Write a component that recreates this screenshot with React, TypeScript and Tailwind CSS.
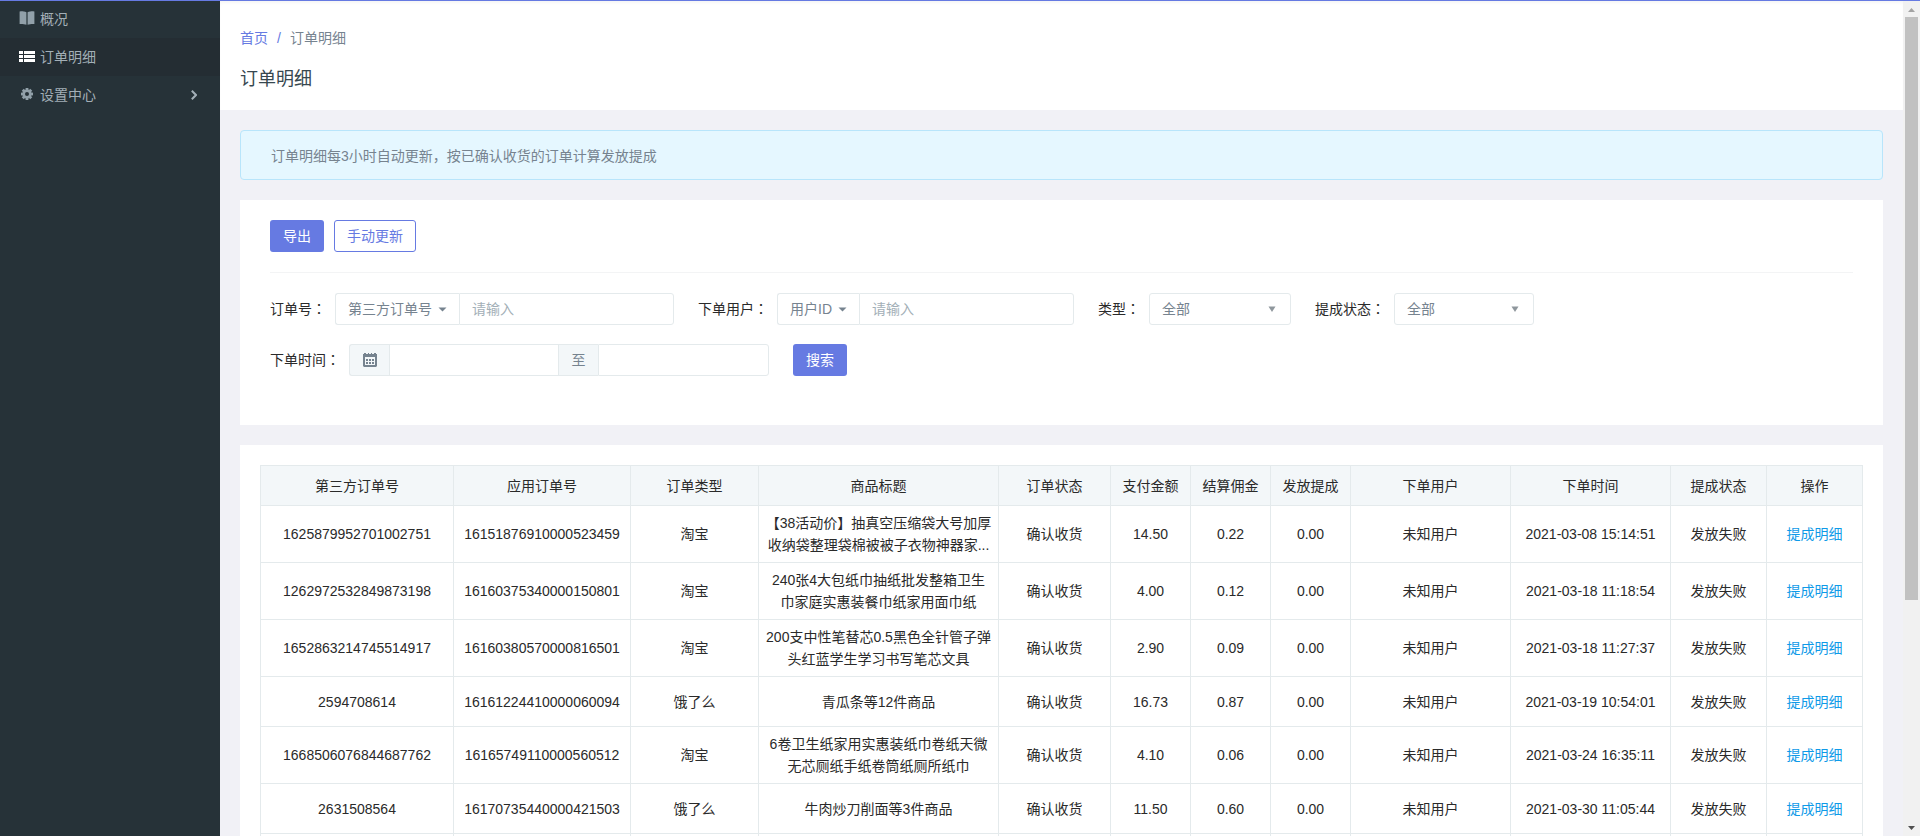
import type { ReactNode } from "react";

type Order = {
  thirdNo: string;
  appNo: string;
  type: string;
  title: string;
  paid: string;
  commission: string;
  issued: string;
  time: string;
};

const orders: Order[] = [
  {
    thirdNo: "1625879952701002751",
    appNo: "16151876910000523459",
    type: "淘宝",
    title: "【38活动价】抽真空压缩袋大号加厚收纳袋整理袋棉被被子衣物神器家...",
    paid: "14.50",
    commission: "0.22",
    issued: "0.00",
    time: "2021-03-08 15:14:51",
  },
  {
    thirdNo: "1262972532849873198",
    appNo: "16160375340000150801",
    type: "淘宝",
    title: "240张4大包纸巾抽纸批发整箱卫生巾家庭实惠装餐巾纸家用面巾纸",
    paid: "4.00",
    commission: "0.12",
    issued: "0.00",
    time: "2021-03-18 11:18:54",
  },
  {
    thirdNo: "1652863214745514917",
    appNo: "16160380570000816501",
    type: "淘宝",
    title: "200支中性笔替芯0.5黑色全针管子弹头红蓝学生学习书写笔芯文具",
    paid: "2.90",
    commission: "0.09",
    issued: "0.00",
    time: "2021-03-18 11:27:37",
  },
  {
    thirdNo: "2594708614",
    appNo: "16161224410000060094",
    type: "饿了么",
    title: "青瓜条等12件商品",
    paid: "16.73",
    commission: "0.87",
    issued: "0.00",
    time: "2021-03-19 10:54:01",
  },
  {
    thirdNo: "1668506076844687762",
    appNo: "16165749110000560512",
    type: "淘宝",
    title: "6卷卫生纸家用实惠装纸巾卷纸天微无芯厕纸手纸卷筒纸厕所纸巾",
    paid: "4.10",
    commission: "0.06",
    issued: "0.00",
    time: "2021-03-24 16:35:11",
  },
  {
    thirdNo: "2631508564",
    appNo: "16170735440000421503",
    type: "饿了么",
    title: "牛肉炒刀削面等3件商品",
    paid: "11.50",
    commission: "0.60",
    issued: "0.00",
    time: "2021-03-30 11:05:44",
  },
];

const columns = [
  { label: "第三方订单号", width: "w-[193px]" },
  { label: "应用订单号", width: "w-[177px]" },
  { label: "订单类型", width: "w-[128px]" },
  { label: "商品标题", width: "w-[240px]" },
  { label: "订单状态", width: "w-[112px]" },
  { label: "支付金额", width: "w-[80px]" },
  { label: "结算佣金", width: "w-[80px]" },
  { label: "发放提成", width: "w-[80px]" },
  { label: "下单用户", width: "w-[160px]" },
  { label: "下单时间", width: "w-[160px]" },
  { label: "提成状态", width: "w-[96px]" },
  { label: "操作", width: "w-[96px]" },
];

const BookIcon = () => (
  <svg viewBox="0 0 16 14" className="h-3.5 w-4" fill="currentColor">
    <path d="M.6.4 2 .3C4 .3 6 .7 7.400 1.300V13.800C6 13.200 4 12.900 2 12.900L.6 13z" />
    <path d="M15.400.4 14 .3C12 .3 10 .7 8.600 1.300V13.800C10 13.200 12 12.900 14 12.900L15.400 13z" />
  </svg>
);

const ListIcon = () => (
  <svg viewBox="0 0 16 11" className="h-[11px] w-4" fill="currentColor">
    <path d="M0 0h4v3H0zM5 0h11v3H5zM0 4h4v3H0zM5 4h11v3H5zM0 8h4v3H0zM5 8h11v3H5z" />
  </svg>
);

const GearIcon = () => (
  <svg viewBox="0 0 14 14" className="h-3.5 w-4">
    <g fill="currentColor">
      <rect x="5.600" y="1" width="2.800" height="12" />
      <rect x="5.600" y="1" width="2.800" height="12" transform="rotate(45 7 7)" />
      <rect x="5.600" y="1" width="2.800" height="12" transform="rotate(90 7 7)" />
      <rect x="5.600" y="1" width="2.800" height="12" transform="rotate(135 7 7)" />
    </g>
    <circle cx="7" cy="7" r="3.300" fill="none" stroke="currentColor" strokeWidth="2.600" />
    <circle cx="7" cy="7" r="2" fill="#263238" />
  </svg>
);

const CalendarIcon = () => (
  <svg viewBox="0 0 14 14" className="size-3.5" fill="currentColor">
    <path
      fillRule="evenodd"
      d="M0 1h1V0h2v1h2V0h1v1h2V0h1v1h2V0h2v1h1v12l-1 1H1l-1-1zM2 4v8h10V4z"
    />
    <path d="M3 6h2v2H3zM6 6h2v2H6zM9 6h2v2H9zM3 9h2v2H3zM6 9h2v2H6zM9 9h2v2H9z" />
  </svg>
);

const Caret = () => (
  <svg viewBox="0 0 9 5" className="h-[5px] w-[9px]" fill="currentColor">
    <path d="M.5.5h8L4.500 4.500z" />
  </svg>
);

const MenuItem = ({
  icon,
  label,
  active,
  arrow,
}: {
  icon: ReactNode;
  label: string;
  active?: boolean;
  arrow?: boolean;
}) => (
  <li>
    <a
      href="#"
      className={`flex h-[38px] items-center px-[19px] text-[#a3afb7] ${active ? "bg-[#242d33]" : ""}`}
    >
      <span className={`mr-[5px] pb-0.5 ${active ? "text-white" : "text-[#91a0a9]"}`}>{icon}</span>
      <span>{label}</span>
      {arrow && (
        <svg viewBox="0 0 6 10" className="mr-1 ml-auto h-2.5 w-1.5" fill="none" stroke="currentColor" strokeWidth="2">
          <path d="M.8.8 5 5 .8 9.200" />
        </svg>
      )}
    </a>
  </li>
);

const FieldLabel = ({ htmlFor, text }: { htmlFor: string; text: string }) => (
  <label htmlFor={htmlFor} className="mr-[9px]">
    {text}
    <span className="font-['Noto_Sans_CJK_TC',sans-serif] leading-none">：</span>
  </label>
);

const SelectBox = ({ id, label, width }: { id: string; label: string; width: string }) => (
  <div className="flex items-center">
    <FieldLabel htmlFor={id} text={label} />
    <div className={`relative ${width}`}>
      <select
        id={id}
        className="h-8 w-full appearance-none rounded-[3px] border border-[#e4eaec] bg-white px-3 text-[#76838f]"
      >
        <option>全部</option>
      </select>
      <svg viewBox="0 0 8 6" className="pointer-events-none absolute top-[13px] right-[15px] h-1.5 w-2" fill="#8f979d">
        <path d="M.5.5h7L4 6z" />
      </svg>
    </div>
  </div>
);

const InputGroup = ({
  id,
  label,
  option,
}: {
  id: string;
  label: string;
  option: string;
}) => (
  <div className="flex items-center">
    <FieldLabel htmlFor={id} text={label} />
    <button
      type="button"
      className="flex h-8 items-center gap-1.5 rounded-l-[3px] border border-r-0 border-[#e4eaec] px-3 text-[#76838f]"
    >
      {option}
      <Caret />
    </button>
    <input
      id={id}
      type="text"
      placeholder="请输入"
      className="h-8 w-[215px] rounded-r-[3px] border border-[#e4eaec] px-3 placeholder:text-[#a3afb7]"
    />
  </div>
);

const App = () => {
  return (
    <div className="relative flex h-screen overflow-hidden bg-[#f1f1f6] font-['Liberation_Sans','Noto_Sans_CJK_SC',sans-serif] text-sm text-[#2a2a2a]">
      {/* Loading bar */}
      <div className="absolute inset-x-0 top-0 z-10 h-px bg-[#667ae2]" />

      {/* Sidebar */}
      <nav className="w-[220px] shrink-0 bg-[#263238]">
        <ul>
          <MenuItem icon={<BookIcon />} label="概况" />
          <MenuItem icon={<ListIcon />} label="订单明细" active />
          <MenuItem icon={<GearIcon />} label="设置中心" arrow />
        </ul>
      </nav>

      <main className="min-w-0 flex-1 overflow-hidden">
        {/* Page header */}
        <header className="h-[110px] bg-white px-5 pt-[27px] shadow-[inset_0_4px_4px_-2px_rgba(0,0,0,0.06)]">
          <nav className="flex gap-[9px] leading-[22px] text-[#76838f]">
            <a href="#" className="text-[#667ae2]">
              首页
            </a>
            <span className="text-[#667ae2]">/</span>
            <span>订单明细</span>
          </nav>
          <h1 className="mt-[17px] text-lg leading-[26px] text-[#37474f]">订单明细</h1>
        </header>

        <div className="flex flex-col gap-5 p-5">
          <div className="rounded-[4px] border border-[#b8e5fb] bg-[#e5f7ff] px-[30px] pt-3.5 pb-3 leading-[22px] text-[#76838f]">
            订单明细每3小时自动更新，按已确认收货的订单计算发放提成
          </div>

          {/* Filters */}
          <section className="bg-white px-[30px] pt-5 pb-[49px]">
            <div className="flex gap-2.5 border-b border-[#f3f4f5] pb-5">
              <button type="button" className="h-8 rounded-[3px] bg-[#667ae2] px-[13px] text-white">
                导出
              </button>
              <button
                type="button"
                className="h-8 rounded-[3px] border border-[#667ae2] bg-white px-3 text-[#667ae2]"
              >
                手动更新
              </button>
            </div>

            <form className="mt-5 flex flex-wrap items-center gap-x-6 gap-y-[19px]">
              <InputGroup id="orderNo" label="订单号" option="第三方订单号" />
              <InputGroup id="orderUser" label="下单用户" option="用户ID" />
              <SelectBox id="orderType" label="类型" width="w-[142px]" />
              <SelectBox id="status" label="提成状态" width="w-[140px]" />

              <div className="flex w-full items-center gap-6">
                <div className="flex items-center">
                  <FieldLabel htmlFor="dateStart" text="下单时间" />
                  <span className="flex h-8 w-10 items-center justify-center rounded-l-[3px] border border-r-0 border-[#e4eaec] bg-[#f3f7f9] text-[#76838f]">
                    <CalendarIcon />
                  </span>
                  <input id="dateStart" type="text" className="h-8 w-[170px] border border-[#e4eaec] px-3" />
                  <label
                    htmlFor="dateEnd"
                    className="flex h-8 w-[39px] items-center justify-center border-y border-[#e4eaec] bg-[#f3f7f9] text-[#76838f]"
                  >
                    至
                  </label>
                  <input
                    id="dateEnd"
                    type="text"
                    className="h-8 w-[171px] rounded-r-[3px] border border-[#e4eaec] px-3"
                  />
                </div>
                <button type="button" className="h-8 rounded-[3px] bg-[#667ae2] px-[13px] text-white">
                  搜索
                </button>
              </div>
            </form>
          </section>

          {/* Orders */}
          <section className="bg-white p-5">
            <table className="w-full table-fixed border-collapse text-center leading-[22px]">
              <thead>
                <tr className="h-10 bg-[#f3f7f9]">
                  {columns.map((col) => (
                    <th key={col.label} className={`border border-[#e4eaec] font-normal ${col.width}`}>
                      {col.label}
                    </th>
                  ))}
                </tr>
              </thead>
              <tbody>
                {orders.map((order) => (
                  <tr key={order.appNo} className="h-[50px] *:border *:border-[#e4eaec] *:px-1.5 *:py-1.5">
                    <td>{order.thirdNo}</td>
                    <td>{order.appNo}</td>
                    <td>{order.type}</td>
                    <td>{order.title}</td>
                    <td>确认收货</td>
                    <td>{order.paid}</td>
                    <td>{order.commission}</td>
                    <td>{order.issued}</td>
                    <td>未知用户</td>
                    <td>{order.time}</td>
                    <td>发放失败</td>
                    <td>
                      <a href="#" className="text-[#0e9ae8]">
                        提成明细
                      </a>
                    </td>
                  </tr>
                ))}
                <tr className="h-[50px] *:border *:border-[#e4eaec]">
                  {columns.map((col) => (
                    <td key={col.label} />
                  ))}
                </tr>
              </tbody>
            </table>
          </section>
        </div>
      </main>

      {/* Scrollbar */}
      <div className="flex w-[17px] shrink-0 flex-col items-center bg-[#f1f1f1]" aria-hidden="true">
        <svg viewBox="0 0 17 17" className="size-[17px] shrink-0" fill="#a3a3a3">
          <path d="M5 12h7L8.500 8z" />
        </svg>
        <div className="min-h-0 w-[13px] flex-[583] bg-[#c1c1c1]" />
        <div className="min-h-0 flex-[219]" />
        <svg viewBox="0 0 17 17" className="size-[17px] shrink-0" fill="#505050">
          <path d="M5 7h7L8.500 11z" />
        </svg>
      </div>
    </div>
  );
};

export default App;
